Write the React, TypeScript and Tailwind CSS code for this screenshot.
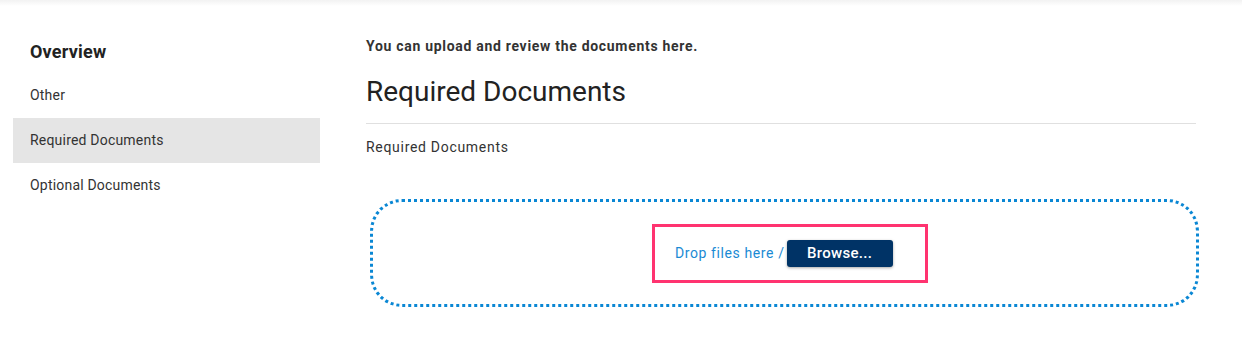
import React from "react";

// ─── Sidebar ──────────────────────────────────────────────────────────────────

const NAV_ITEMS = [
  { label: "Other", active: false },
  { label: "Required Documents", active: true },
  { label: "Optional Documents", active: false },
];

const Sidebar: React.FC = () => (
  <aside className="w-[307px] flex-shrink-0 ml-[13px]">
    <h2 className="pl-[17px] pt-[40px] pb-[9px] text-[18px] font-bold text-[#222] leading-[24px] tracking-[0.2px]">
      Overview
    </h2>
    <ul>
      {NAV_ITEMS.map((item) => (
        <li
          key={item.label}
          className={`h-[45px] pl-[17px] flex items-center text-[14px] text-[#333] tracking-[0.2px] ${
            item.active ? "bg-[#e5e5e5]" : ""
          }`}
        >
          {item.label}
        </li>
      ))}
    </ul>
  </aside>
);

// ─── Main page ────────────────────────────────────────────────────────────────

const App: React.FC = () => {
  return (
    <div className="relative w-[1242px] h-[339px] bg-white font-['Roboto',sans-serif] overflow-hidden">
      {/* faint header shadow */}
      <div className="absolute inset-x-0 top-0 h-[6px] bg-gradient-to-b from-[#f2f2f2] to-white" />

      <div className="flex">
        <Sidebar />

        <main className="ml-[46px] w-[830px]">
          <p className="pt-[37px] text-[14px] font-bold text-[#333] leading-[18px] tracking-[0.7px]">
            You can upload and review the documents here.
          </p>
          <h1 className="mt-[19px] text-[28px] text-[#222] leading-[36px] pb-[13px] border-b border-[#e0e0e0]">
            Required Documents
          </h1>
          <p className="mt-[14px] text-[14px] text-[#333] leading-[18px] tracking-[0.7px]">
            Required Documents
          </p>

          {/* Drop zone */}
          <div className="mt-[43px] ml-[4px] w-[829px] h-[108px] border-[3px] border-dotted border-[#0a87d4] rounded-[32px] flex items-center">
            <div className="ml-[279px] w-[276px] h-[59px] border-[3px] border-[#ff3370] flex items-center pl-[20px] gap-[2px]">
              <span className="text-[14px] text-[#1a8ad4] tracking-[0.6px]">Drop files here /</span>
              <button className="w-[106px] h-[27px] rounded-[3px] bg-[#003366] text-white text-[15px] font-medium tracking-[0.3px] shadow-[0_1px_3px_rgba(0,0,0,0.35)]">
                Browse...
              </button>
            </div>
          </div>
        </main>
      </div>
    </div>
  );
};

export default App;
